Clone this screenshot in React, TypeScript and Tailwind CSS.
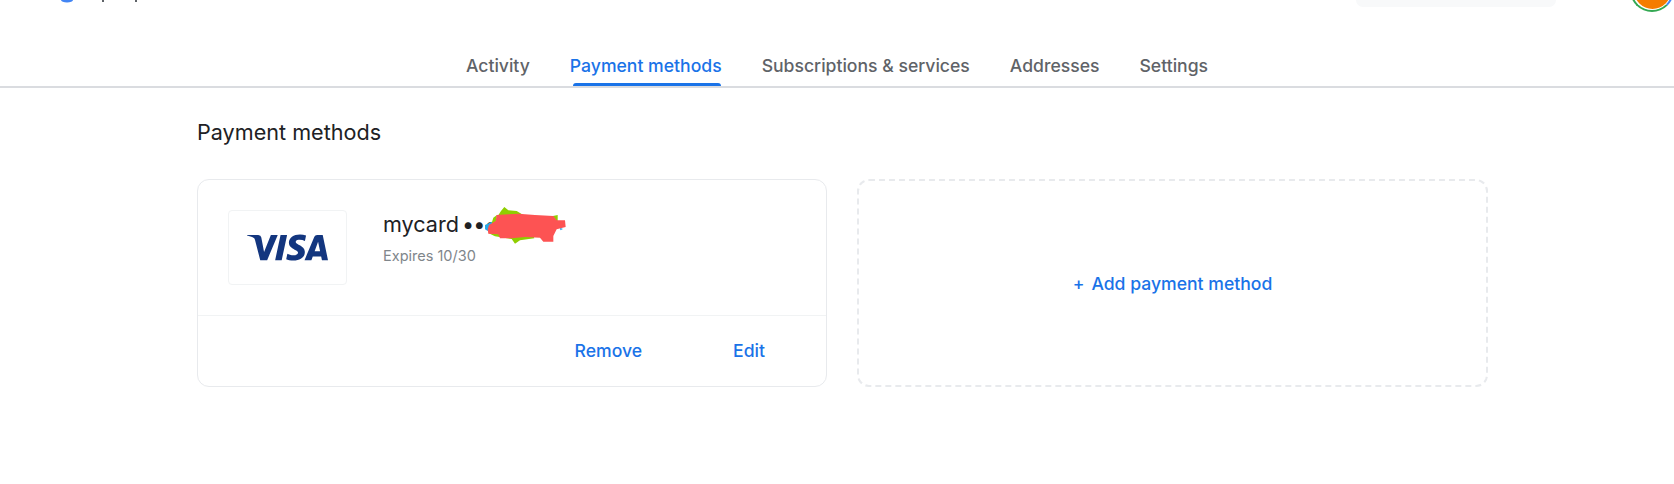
import { SiVisa } from "react-icons/si";

const tabs = ["Activity", "Payment methods", "Subscriptions & services", "Addresses", "Settings"];

// the red marker scribble that hides the card number
function Scribble() {
  return (
    <svg width="100" height="50" viewBox="0 0 300 150" className="absolute left-[92px] top-[-9px]">
      <path d="M30 72 L50 62 L60 68 L42 82 L38 90 L30 85 Z" fill="#29a9e8" />
      <path d="M255 80 L264 84 L256 88 Z" fill="#29a9e8" />
      <path d="M78 30 L88 18 L100 28 L125 30 L145 42 L65 50 Z" fill="#8fce00" />
      <path d="M55 50 L66 42 L62 72 L50 66 Z" fill="#8fce00" />
      <path d="M40 96 L60 106 L110 114 L120 128 L135 118 L178 112 L176 104 L70 98 Z" fill="#8fce00" />
      <path d="M230 46 L248 42 L248 62 L236 60 Z" fill="#8fce00" />
      <path
        d="M38 85 L42 72 L62 60 L65 42 L100 40 L130 38 L180 42 L235 45 L245 58 L270 58 L272 78 L245 85 L235 105 L235 122 L205 122 L195 110 L150 108 L110 112 L75 112 L70 100 L40 98 Z"
        fill="#fd5353"
      />
    </svg>
  );
}

export default function App() {
  return (
    <div className="h-[484px] overflow-hidden bg-white font-['Inter',sans-serif]">
      <header className="flex h-[41px] items-start">
        <svg width="100" height="4" viewBox="0 0 100 4" className="ml-[61px]">
          <ellipse cx="6" cy="0" rx="6" ry="2.5" fill="#4285f4" />
          <rect x="41" y="0" width="2" height="2" fill="#5f6368" />
          <rect x="74" y="0" width="2" height="2" fill="#5f6368" />
        </svg>
        <div className="ml-auto mr-[74px] h-[7px] w-[200px] rounded-b-[20px] bg-[#f8f9fa]" />
        <div className="h-[12px] w-[44px] overflow-hidden">
          <div className="-mt-[32px] flex h-[44px] w-[44px] items-center justify-center rounded-full border-2 border-[#34a853] border-r-[#4285f4] bg-white">
            <div className="h-[37px] w-[37px] rounded-full bg-[#f57c00]" />
          </div>
        </div>
      </header>

      <nav className="flex h-[47px] justify-center gap-[40px] border-b-2 border-[#dadce0]">
        {tabs.map((tab) => (
          <div
            key={tab}
            className={
              tab === "Payment methods"
                ? "relative flex h-[45px] items-center pt-[5px] text-[17.6px] font-medium text-[#1a73e8]"
                : "flex h-[45px] items-center pt-[5px] text-[17.6px] font-medium text-[#5f6368]"
            }
          >
            {tab}
            {tab === "Payment methods" && (
              <div className="absolute bottom-0 left-[3px] right-[1px] h-[3px] rounded-t-[3px] bg-[#1a73e8]" />
            )}
          </div>
        ))}
      </nav>

      <main className="pl-[197px]">
        <h1 className="mt-[29px] text-[21.6px] leading-[30px] text-[#202124]">Payment methods</h1>
        <div className="mt-[32px] flex gap-[30px]">
          <section className="h-[208px] w-[630px] shrink-0 rounded-[12px] border border-[#e8eaed]">
            <div className="flex h-[136px] items-center gap-[36px] border-b border-[#f1f3f4] pl-[30px]">
              <div className="flex h-[75px] w-[119px] items-center justify-center rounded-[4px] border border-[#f1f3f4]">
                <SiVisa className="text-[#13367f]" size={81} />
              </div>
              <div className="-mt-[18px]">
                <div className="relative flex h-[28px] items-center text-[21.6px] text-[#202124]">
                  mycard
                  <span className="ml-[3px] tracking-[-1px]">•••</span>
                  <Scribble />
                </div>
                <p className="mt-[7px] text-[14.5px] text-[#80868b]">Expires 10/30</p>
              </div>
            </div>
            <div className="flex h-[70px] items-center justify-end gap-[91px] pr-[61px] pt-[1px] text-[17.6px] font-medium text-[#1a73e8]">
              <span>Remove</span>
              <span>Edit</span>
            </div>
          </section>
          <section className="flex h-[208px] w-[631px] shrink-0 items-center justify-center rounded-[12px] border-2 border-dashed border-[#e8eaed] pt-[3px] text-[17.6px] font-medium text-[#1a73e8]">
            <span className="mr-[7px]">+</span>
            <span>Add payment method</span>
          </section>
        </div>
      </main>
    </div>
  );
}
